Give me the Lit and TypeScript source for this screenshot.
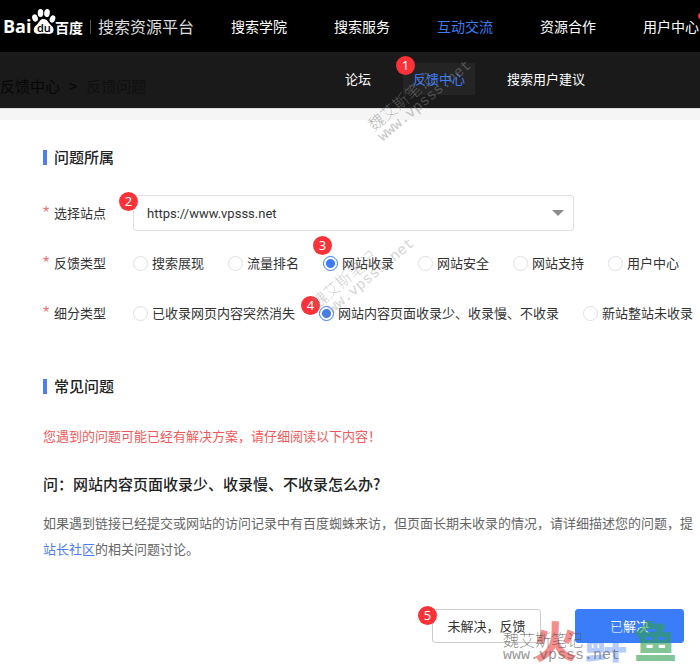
import { LitElement, html, css, nothing } from "lit";
import { customElement, property, state } from "lit/decorators.js";

interface Choice {
  label: string;
  step?: number;
  place?: string;
}

@customElement("step-badge")
export class StepBadge extends LitElement {
  static styles = css`
    :host {
      display: block;
      width: 19px;
      height: 19px;
      border-radius: 50%;
      background: #fb3238;
      color: #fff;
      font: 13px/19px "Noto Sans", sans-serif;
      text-align: center;
    }
  `;
  render() {
    return html`<slot></slot>`;
  }
}

@customElement("radio-row")
export class RadioRow extends LitElement {
  @property() name = "";
  @property() legend = "";
  @property({ attribute: false }) choices: Choice[] = [];
  @state() picked = 0;
  @property({ type: Number }) initial = 0;

  static styles = css`
    .row {
      display: flex;
      align-items: center;
      height: 20px;
      white-space: nowrap;
    }
    .legend {
      flex: 0 0 90px;
    }
    .star {
      display: inline-block;
      width: 11px;
      color: #f56c6c;
      font-family: "Liberation Sans", sans-serif;
      font-size: 16px;
      line-height: 16px;
    }
    .options {
      display: flex;
      gap: 24px;
    }
    .option {
      position: relative;
      display: flex;
      align-items: center;
      gap: 4px;
    }
    input {
      appearance: none;
      box-sizing: border-box;
      width: 15px;
      height: 15px;
      margin: 0;
      border: 1px solid #dcdfe6;
      border-radius: 50%;
      background: #fff;
    }
    input:checked {
      border-color: #3b7cf5;
      background: radial-gradient(circle, #3b7cf5 0 4px, #fff 5px);
    }
    step-badge {
      position: absolute;
    }
    .above {
      left: -10px;
      top: -17px;
    }
    .beside {
      left: -18px;
      top: -7px;
    }
  `;

  connectedCallback() {
    super.connectedCallback();
    this.picked = this.initial;
  }

  render() {
    return html`
      <div class="row" role="radiogroup" aria-labelledby="legend">
        <span class="legend" id="legend"><span class="star">*</span>${this.legend}</span>
        <div class="options">
          ${this.choices.map(
            (c, i) => html`<label class="option">
              <input
                type="radio"
                name=${this.name}
                .checked=${i === this.picked}
                @change=${() => (this.picked = i)}
              />
              <span>${c.label}</span>
              ${c.step ? html`<step-badge class=${c.place ?? "above"}>${c.step}</step-badge>` : nothing}
            </label>`
          )}
        </div>
      </div>
    `;
  }
}

@customElement("app-root")
export class AppRoot extends LitElement {
  private kinds: Choice[] = [
    { label: "搜索展现" },
    { label: "流量排名" },
    { label: "网站收录", step: 3, place: "above" },
    { label: "网站安全" },
    { label: "网站支持" },
    { label: "用户中心" },
  ];
  private details: Choice[] = [
    { label: "已收录网页内容突然消失" },
    { label: "网站内容页面收录少、收录慢、不收录", step: 4, place: "beside" },
    { label: "新站整站未收录" },
  ];

  static styles = css`
    :host {
      display: block;
      position: relative;
      min-height: 100vh;
      overflow: hidden;
      background: #fff;
      color: #333;
      font: 13px/20px "Noto Sans CJK SC", sans-serif;
    }
    a {
      color: inherit;
      text-decoration: none;
    }
    .top {
      display: flex;
      align-items: center;
      height: 52px;
      padding: 0 0 0 4px;
      background: #000;
      color: #fff;
      white-space: nowrap;
    }
    .brand {
      display: flex;
      align-items: center;
      flex: 0 0 227px;
      font-size: 16px;
      line-height: 24px;
      color: #ddd;
    }
    .logo {
      width: 80px;
      height: 32px;
      margin-bottom: 4px;
    }
    .platform {
      position: relative;
      margin-left: 6px;
      padding-left: 8px;
    }
    .platform::before {
      content: "";
      position: absolute;
      left: 0;
      top: 6px;
      width: 1px;
      height: 14px;
      background: #555;
    }
    .menu {
      display: flex;
      gap: 47px;
      font-size: 14px;
    }
    .menu a {
      position: relative;
    }
    .active {
      color: #3b7cf5;
    }
    .dot {
      position: absolute;
      right: -5px;
      top: -3px;
      width: 6px;
      height: 6px;
      border-radius: 50%;
      background: #fb3238;
    }
    .sub {
      display: flex;
      height: 56px;
      background: #1a1a1a;
      color: #fff;
      white-space: nowrap;
    }
    .crumbs {
      display: flex;
      gap: 9px;
      flex: 0 0 335px;
      padding-top: 24px;
      font-size: 15px;
      color: #060606;
    }
    .crumbs .here {
      color: #0f0f0f;
    }
    .tabs {
      display: flex;
      align-items: flex-start;
      gap: 22px;
      padding-top: 11px;
    }
    .tabs a {
      position: relative;
      padding: 6px 10px;
    }
    .tabs .active {
      background: #242424;
    }
    step-badge {
      position: absolute;
    }
    .tab-step {
      left: -7px;
      top: -7px;
    }
    .band {
      height: 11px;
      background: #f5f5f5;
      border-top: 1px solid #ddd;
    }
    main {
      padding: 25px 0 20px 43px;
    }
    h2 {
      display: flex;
      align-items: center;
      gap: 7px;
      margin: 0;
      font-size: 15px;
      line-height: 24px;
      font-weight: 500;
      color: #222;
    }
    h2::before {
      content: "";
      width: 4px;
      height: 15px;
      background: #4e7df0;
    }
    .site {
      display: flex;
      align-items: center;
      margin-top: 26px;
    }
    .site label {
      flex: 0 0 90px;
    }
    .star {
      display: inline-block;
      width: 11px;
      color: #f56c6c;
      font-family: "Liberation Sans", sans-serif;
      font-size: 16px;
      line-height: 16px;
    }
    .pick {
      position: relative;
      flex: 0 1 441px;
      margin-right: 16px;
    }
    select {
      display: block;
      appearance: none;
      box-sizing: border-box;
      width: 100%;
      height: 36px;
      padding: 0 30px 0 13px;
      border: 1px solid #dcdfe6;
      border-radius: 3px;
      background: #fff;
      color: #333;
      font: 13px Roboto, sans-serif;
    }
    .pick::after {
      content: "";
      position: absolute;
      right: 10px;
      top: 15px;
      border: 6px solid transparent;
      border-top-color: #8c8c8c;
      border-bottom: 0;
      pointer-events: none;
    }
    .site-step {
      left: -14px;
      top: -3px;
    }
    radio-row {
      display: block;
      margin-top: 30px;
    }
    .kinds {
      margin-top: 22px;
    }
    .faq {
      margin-top: 51px;
    }
    .notice {
      margin: 28px 0 0;
      color: #f05a5a;
    }
    h3 {
      margin: 26px 0 0;
      font-size: 15px;
      line-height: 24px;
      font-weight: 500;
      color: #222;
    }
    .answer {
      margin: 14px 0 0;
      line-height: 26px;
      color: #666;
      white-space: nowrap;
    }
    .answer a {
      color: #4e7df0;
    }
    .actions {
      display: flex;
      justify-content: flex-end;
      gap: 34px;
      margin-top: 47px;
      padding-right: 16px;
    }
    .action {
      position: relative;
    }
    button {
      display: block;
      width: 109px;
      height: 34px;
      padding: 0;
      border: 1px solid #ccc;
      border-radius: 3px;
      background: #fff;
      color: #333;
      font: inherit;
    }
    .primary {
      border-color: #3b7cf9;
      background: #3b7cf9;
      color: #fff;
    }
    .action-step {
      left: -14px;
      top: -3px;
    }
    .mark {
      position: absolute;
      font: 100 16px/18px "Noto Sans CJK SC", sans-serif;
      color: #888c;
      white-space: nowrap;
      pointer-events: none;
    }
    .mark span {
      display: block;
      font: 15px/16px "Liberation Mono", monospace;
      opacity: 0.6;
    }
    .tilt {
      transform: rotate(-40deg);
    }
    .m1 {
      left: 361px;
      top: 78px;
    }
    .m2 {
      left: 304px;
      top: 256px;
      color: #8889;
    }
    .m3 {
      right: 80px;
      bottom: 0;
      color: #555;
    }
    .fish {
      display: flex;
      gap: 7px;
      right: 23px;
      bottom: 2px;
      font: 900 43px/46px "Noto Sans CJK SC", sans-serif;
    }
    .fish b {
      font: inherit;
      color: #f0404099;
    }
    .fish b:nth-child(2) {
      color: #3b7cf966;
    }
    .fish b:nth-child(3) {
      color: #2ea05099;
    }
  `;

  render() {
    return html`
      <header>
        <div class="top">
          <a class="brand" href="#" aria-label="百度搜索资源平台">
            <svg class="logo" viewBox="0 0 80 32" fill="#fff">
              <text x="-1" y="25" font-family="Open Sans" font-weight="700" font-size="18">Bai</text>
              <ellipse cx="31" cy="10" rx="2.8" ry="3.7" transform="rotate(-15 31 10)" />
              <ellipse cx="36.500" cy="5" rx="2.8" ry="4" />
              <ellipse cx="43" cy="5" rx="2.8" ry="4" transform="rotate(8 43 5)" />
              <ellipse cx="48.500" cy="11" rx="2.7" ry="3.7" transform="rotate(20 48.5 11)" />
              <path d="M39.500 11c3.500 0 4.500 3 6.500 5.200 2 2 4 3.300 3.500 6.300-.5 3.500-4 3.800-6.500 3.300-2.500-.4-4.500-.4-7 0-3 .5-6 0-6.300-3.500-.2-3 1.800-4.300 3.800-6.300 2-2.200 2.500-5 6-5z" />
              <text x="33" y="24" fill="#000" font-family="Open Sans" font-weight="600" font-size="11">du</text>
              <text x="51" y="25" font-family="Noto Sans CJK SC" font-weight="700" font-size="14">百度</text>
            </svg>
            <span class="platform">搜索资源平台</span>
          </a>
          <nav class="menu">
            <a href="#">搜索学院</a>
            <a href="#">搜索服务</a>
            <a href="#" class="active">互动交流</a>
            <a href="#">资源合作</a>
            <a href="#">用户中心<i class="dot"></i></a>
          </nav>
        </div>
        <div class="sub">
          <div class="crumbs"><a href="#">反馈中心</a><span>&gt;</span><span class="here">反馈问题</span></div>
          <nav class="tabs">
            <a href="#">论坛</a>
            <a href="#" class="active">反馈中心<step-badge class="tab-step">1</step-badge></a>
            <a href="#">搜索用户建议</a>
          </nav>
        </div>
        <div class="band"></div>
      </header>
      <main>
        <h2>问题所属</h2>
        <div class="site">
          <label for="site"><span class="star">*</span>选择站点</label>
          <div class="pick">
            <select id="site"><option>https://www.vpsss.net</option></select>
            <step-badge class="site-step">2</step-badge>
          </div>
        </div>
        <radio-row class="kinds" name="kind" legend="反馈类型" .choices=${this.kinds} initial="2"></radio-row>
        <radio-row name="detail" legend="细分类型" .choices=${this.details} initial="1"></radio-row>
        <h2 class="faq">常见问题</h2>
        <p class="notice">您遇到的问题可能已经有解决方案，请仔细阅读以下内容！</p>
        <h3>问：网站内容页面收录少、收录慢、不收录怎么办?</h3>
        <p class="answer">
          如果遇到链接已经提交或网站的访问记录中有百度蜘蛛来访，但页面长期未收录的情况，请详细描述您的问题，提<br />
          <a href="#">站长社区</a>的相关问题讨论。
        </p>
        <div class="actions">
          <div class="action">
            <button type="button">未解决，反馈</button>
            <step-badge class="action-step">5</step-badge>
          </div>
          <button type="button" class="primary">已解决</button>
        </div>
      </main>
      <div class="mark tilt m1">魏艾斯笔记<span>www.vpsss.net</span></div>
      <div class="mark tilt m2">魏艾斯笔记<span>www.vpsss.net</span></div>
      <div class="mark fish"><b>火</b><b>鲜</b><b>鱼</b></div>
      <div class="mark m3">魏艾斯笔记<span>www.vpsss.net</span></div>
    `;
  }
}
